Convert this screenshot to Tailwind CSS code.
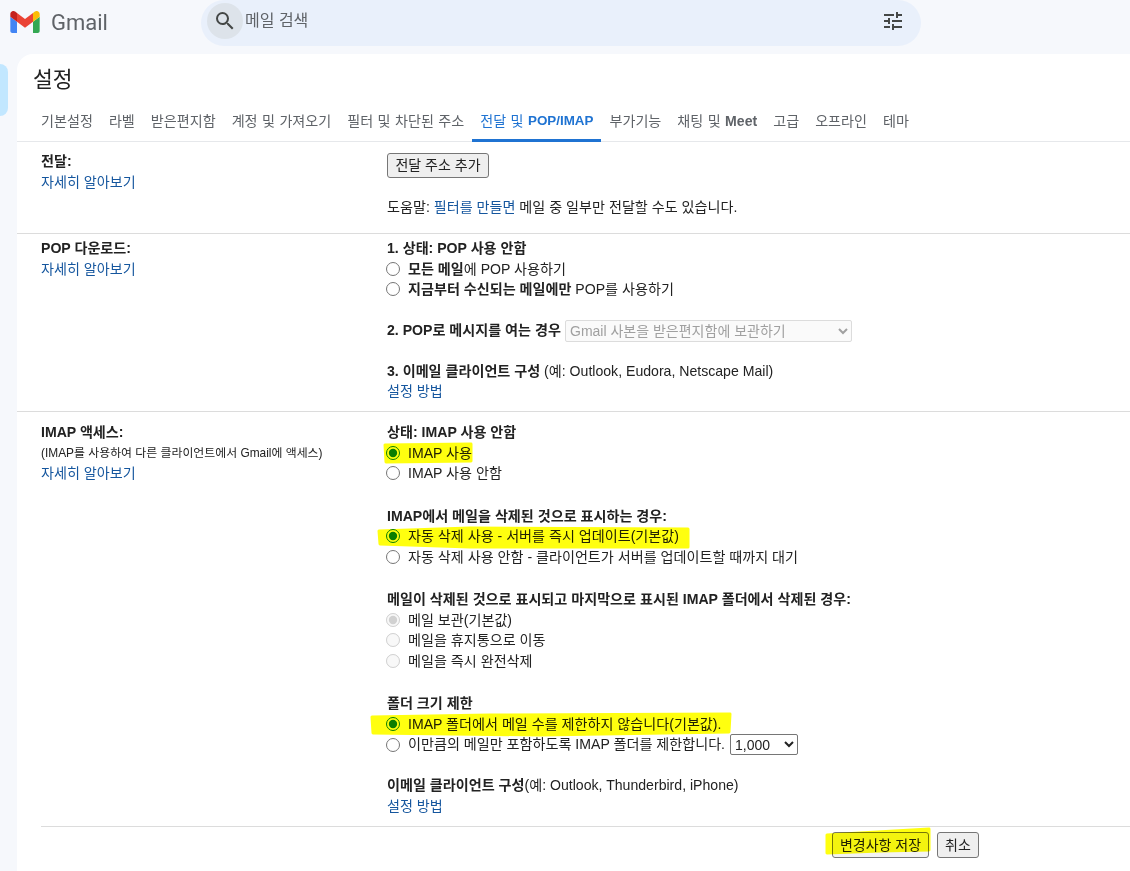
<!DOCTYPE html>
<html lang="ko">
<head>
  <meta charset="UTF-8" />
  <title>Gmail - 설정</title>
  <script src="https://cdn.jsdelivr.net/npm/@tailwindcss/browser@4"></script>
</head>
<body class="relative h-[871px] w-[1130px] overflow-hidden bg-[#f6f8fc] font-['Liberation_Sans','Noto_Sans_CJK_KR',sans-serif] text-[14.1px] leading-[20.5px] text-[#222]">
  <!-- Header -->
  <header class="flex h-[54px]">
    <div class="flex w-[201px] items-start pl-[10px] pt-[11px]">
      <svg class="h-[22px] w-[30px]" viewBox="52 42 88 66">
        <path fill="#4285f4" d="M58 108h14V74L52 59v43c0 3.32 2.69 6 6 6"/>
        <path fill="#34a853" d="M120 108h14c3.32 0 6-2.69 6-6V59l-20 15"/>
        <path fill="#fbbc04" d="M120 48v26l20-15v-8c0-7.42-8.47-11.65-14.4-7.2"/>
        <path fill="#ea4335" d="M72 74V48l24 18 24-18v26L96 92"/>
        <path fill="#c5221f" d="M52 51v8l20 15V48l-5.6-4.2c-5.94-4.45-14.4-.22-14.4 7.2"/>
      </svg>
      <span class="ml-[11px] font-['Roboto',sans-serif] text-[22px] leading-[24px] text-[#5f6368]">Gmail</span>
    </div>
    <div class="flex h-[46px] w-[720px] items-center rounded-full bg-[#e9f0fb] pb-[4px] pl-[6px] pr-[16px]">
      <div class="flex h-[36px] w-[36px] items-center justify-center rounded-full bg-[#dde3ea]">
        <svg class="h-[24px] w-[24px]" viewBox="0 0 24 24" fill="#444746"><path d="M15.5 14h-.79l-.28-.27A6.471 6.471 0 0 0 16 9.5 6.5 6.5 0 1 0 9.5 16c1.61 0 3.09-.59 4.23-1.57l.27.28v.79l5 4.99L20.49 19l-4.99-5zm-6 0C7.01 14 5 11.99 5 9.5S7.01 5 9.5 5 14 7.01 14 9.5 11.99 14 9.5 14z"/></svg>
      </div>
      <span class="ml-[2px] flex-1 text-[16px] text-[#5f6368]">메일 검색</span>
      <svg class="h-[24px] w-[24px]" viewBox="0 0 24 24" fill="#444746"><path d="M3 17v2h6v-2H3zM3 5v2h10V5H3zm10 16v-2h8v-2h-8v-2h-2v6h2zM7 9v2H3v2h4v2h2V9H7zm14 4v-2H11v2h10zm-6-4h2V7h4V5h-4V3h-2v6z"/></svg>
    </div>
  </header>

  <div class="flex h-[817px]">
    <!-- Sidebar sliver -->
    <div class="w-[17px] shrink-0 pt-[10px]">
      <div class="h-[52px] w-[8px] rounded-r-[10px] bg-[#c2e7ff]"></div>
    </div>

    <main class="flex-1 rounded-tl-[16px] bg-white">
      <h1 class="flex h-[50px] items-center pl-[16px] pt-[2px] text-[21.5px] font-normal">설정</h1>

      <!-- Tabs -->
      <nav class="flex h-[38px] border-b border-[#e6e8eb] pl-[16px] text-[#5f6368] [word-spacing:0.5px]">
        <a class="flex h-[38px] items-center whitespace-nowrap border-b-[3px] border-transparent px-[8px]">기본설정</a>
        <a class="flex h-[38px] items-center whitespace-nowrap border-b-[3px] border-transparent px-[8px]">라벨</a>
        <a class="flex h-[38px] items-center whitespace-nowrap border-b-[3px] border-transparent px-[8px]">받은편지함</a>
        <a class="flex h-[38px] items-center whitespace-nowrap border-b-[3px] border-transparent px-[8px]">계정 및 가져오기</a>
        <a class="flex h-[38px] items-center whitespace-nowrap border-b-[3px] border-transparent px-[8px]">필터 및 차단된 주소</a>
        <a class="flex h-[38px] items-center whitespace-nowrap border-b-[3px] border-[#1f73d2] px-[8px] text-[#1f73d2]">전달 및&nbsp;<b class="text-[13.4px]">POP/IMAP</b></a>
        <a class="flex h-[38px] items-center whitespace-nowrap border-b-[3px] border-transparent px-[8px]">부가기능</a>
        <a class="flex h-[38px] items-center whitespace-nowrap border-b-[3px] border-transparent px-[8px]">채팅 및&nbsp;<b>Meet</b></a>
        <a class="flex h-[38px] items-center whitespace-nowrap border-b-[3px] border-transparent px-[8px]">고급</a>
        <a class="flex h-[38px] items-center whitespace-nowrap border-b-[3px] border-transparent px-[8px]">오프라인</a>
        <a class="flex h-[38px] items-center whitespace-nowrap border-b-[3px] border-transparent px-[8px]">테마</a>
      </nav>

      <!-- 전달 -->
      <section class="grid h-[92px] grid-cols-[346px_1fr] border-b border-[#dcdcdc] pl-[24px] pt-[9px]">
        <div>
          <div class="font-bold">전달:</div>
          <a class="text-[#15569e]">자세히 알아보기</a>
        </div>
        <div class="pt-[2px]">
          <button class="h-[25px] w-[102px] rounded-[3px] border border-[#767676] bg-[#efefef] text-[14px]">전달 주소 추가</button>
          <p class="mt-[19px]">도움말: <a class="text-[#15569e]">필터를 만들면</a> 메일 중 일부만 전달할 수도 있습니다.</p>
        </div>
      </section>

      <!-- POP -->
      <section class="grid h-[178px] grid-cols-[346px_1fr] border-b border-[#dcdcdc] pl-[24px] pt-[4px]">
        <div>
          <div class="font-bold">POP 다운로드:</div>
          <a class="text-[#15569e]">자세히 알아보기</a>
        </div>
        <div>
          <div class="font-bold">1. 상태: POP 사용 안함</div>
          <label class="flex items-center gap-[8px]"><input type="radio" name="pop" class="ml-[-1px] h-[14px] w-[14px]" /><span><b>모든 메일</b>에 POP 사용하기</span></label>
          <label class="flex items-center gap-[8px]"><input type="radio" name="pop" class="ml-[-1px] h-[14px] w-[14px]" /><span><b>지금부터 수신되는 메일에만</b> POP를 사용하기</span></label>
          <div class="mt-[20px] flex h-[22px] items-center">
            <b class="w-[178px] shrink-0 whitespace-nowrap">2. POP로 메시지를 여는 경우</b>
            <select disabled class="h-[22px] w-[287px] rounded-[2px] border border-[#dcdcdc] bg-[#fafafa] text-[14px] text-[#a0a0a0]">
              <option>Gmail 사본을 받은편지함에 보관하기</option>
            </select>
          </div>
          <div class="mt-[19px]"><b>3. 이메일 클라이언트 구성</b> (예: Outlook, Eudora, Netscape Mail)</div>
          <a class="text-[#15569e]">설정 방법</a>
        </div>
      </section>

      <!-- IMAP -->
      <section class="grid grid-cols-[346px_1fr] pl-[24px] pt-[10px]">
        <div>
          <div class="font-bold">IMAP 액세스:</div>
          <div class="whitespace-nowrap text-[11.9px]">(IMAP를 사용하여 다른 클라이언트에서 Gmail에 액세스)</div>
          <a class="text-[#15569e]">자세히 알아보기</a>
        </div>
        <div>
          <div class="font-bold">상태: IMAP 사용 안함</div>
          <label class="flex items-center gap-[8px]"><input type="radio" name="imap" checked class="ml-[-1px] h-[14px] w-[14px] accent-[#0a7d0a]" /><span>IMAP 사용</span></label>
          <label class="flex items-center gap-[8px]"><input type="radio" name="imap" class="ml-[-1px] h-[14px] w-[14px]" /><span>IMAP 사용 안함</span></label>

          <div class="mt-[22px] font-bold">IMAP에서 메일을 삭제된 것으로 표시하는 경우:</div>
          <label class="flex items-center gap-[8px]"><input type="radio" name="del" checked class="ml-[-1px] h-[14px] w-[14px] accent-[#0a7d0a]" /><span>자동 삭제 사용 - 서버를 즉시 업데이트(기본값)</span></label>
          <label class="flex items-center gap-[8px]"><input type="radio" name="del" class="ml-[-1px] h-[14px] w-[14px]" /><span>자동 삭제 사용 안함 - 클라이언트가 서버를 업데이트할 때까지 대기</span></label>

          <div class="mt-[22px] whitespace-nowrap font-bold">메일이 삭제된 것으로 표시되고 마지막으로 표시된 IMAP 폴더에서 삭제된 경우:</div>
          <label class="flex items-center gap-[8px]"><input type="radio" name="exp" checked disabled class="ml-[-1px] h-[14px] w-[14px]" /><span>메일 보관(기본값)</span></label>
          <label class="flex items-center gap-[8px]"><input type="radio" name="exp" disabled class="ml-[-1px] h-[14px] w-[14px]" /><span>메일을 휴지통으로 이동</span></label>
          <label class="flex items-center gap-[8px]"><input type="radio" name="exp" disabled class="ml-[-1px] h-[14px] w-[14px]" /><span>메일을 즉시 완전삭제</span></label>

          <div class="mt-[22px] font-bold">폴더 크기 제한</div>
          <label class="flex items-center gap-[8px]"><input type="radio" name="lim" checked class="ml-[-1px] h-[14px] w-[14px] accent-[#0a7d0a]" /><span>IMAP 폴더에서 메일 수를 제한하지 않습니다(기본값).</span></label>
          <label class="flex h-[21px] items-center gap-[8px]"><input type="radio" name="lim" class="ml-[-1px] h-[14px] w-[14px]" /><span class="whitespace-nowrap">이만큼의 메일만 포함하도록 IMAP 폴더를 제한합니다.</span>
            <select class="ml-[-3px] h-[21px] w-[68px] rounded-[2px] border border-[#767676] bg-white text-[14px]"><option>1,000</option></select>
          </label>

          <div class="mt-[20px]"><b>이메일 클라이언트 구성</b>(예: Outlook, Thunderbird, iPhone)</div>
          <a class="text-[#15569e]">설정 방법</a>
        </div>
      </section>

      <!-- 저장 버튼 -->
      <div class="ml-[24px] mt-[10px] flex justify-end gap-[8px] border-t border-[#dcdcdc] pr-[151px] pt-[5px]">
        <button class="h-[26px] w-[97px] rounded-[3px] border border-[#767676] bg-[#f3f3f3] text-[14px]">변경사항 저장</button>
        <button class="h-[26px] w-[42px] rounded-[3px] border border-[#767676] bg-[#efefef] text-[14px]">취소</button>
      </div>
    </main>
  </div>

  <!-- 형광펜 표시 -->
  <svg class="pointer-events-none absolute inset-0 mix-blend-multiply" width="1130" height="871" viewBox="0 0 1130 871" fill="#ffff0f" stroke="#ffff0f" stroke-width="3" stroke-linejoin="round">
    <path d="M385 445 L471 444 L471 461 L386 462 Z"/>
    <path d="M379 531 L470 528 L688 529 L688 547 L470 547 L380 544 Z"/>
    <path d="M372 717 L490 715 L730 714 L729 732 L540 735 L373 733 Z"/>
    <path d="M827 835 L860 833 L929 829 L929 850 L880 851 L827 853 Z"/>
  </svg>
</body>
</html>
